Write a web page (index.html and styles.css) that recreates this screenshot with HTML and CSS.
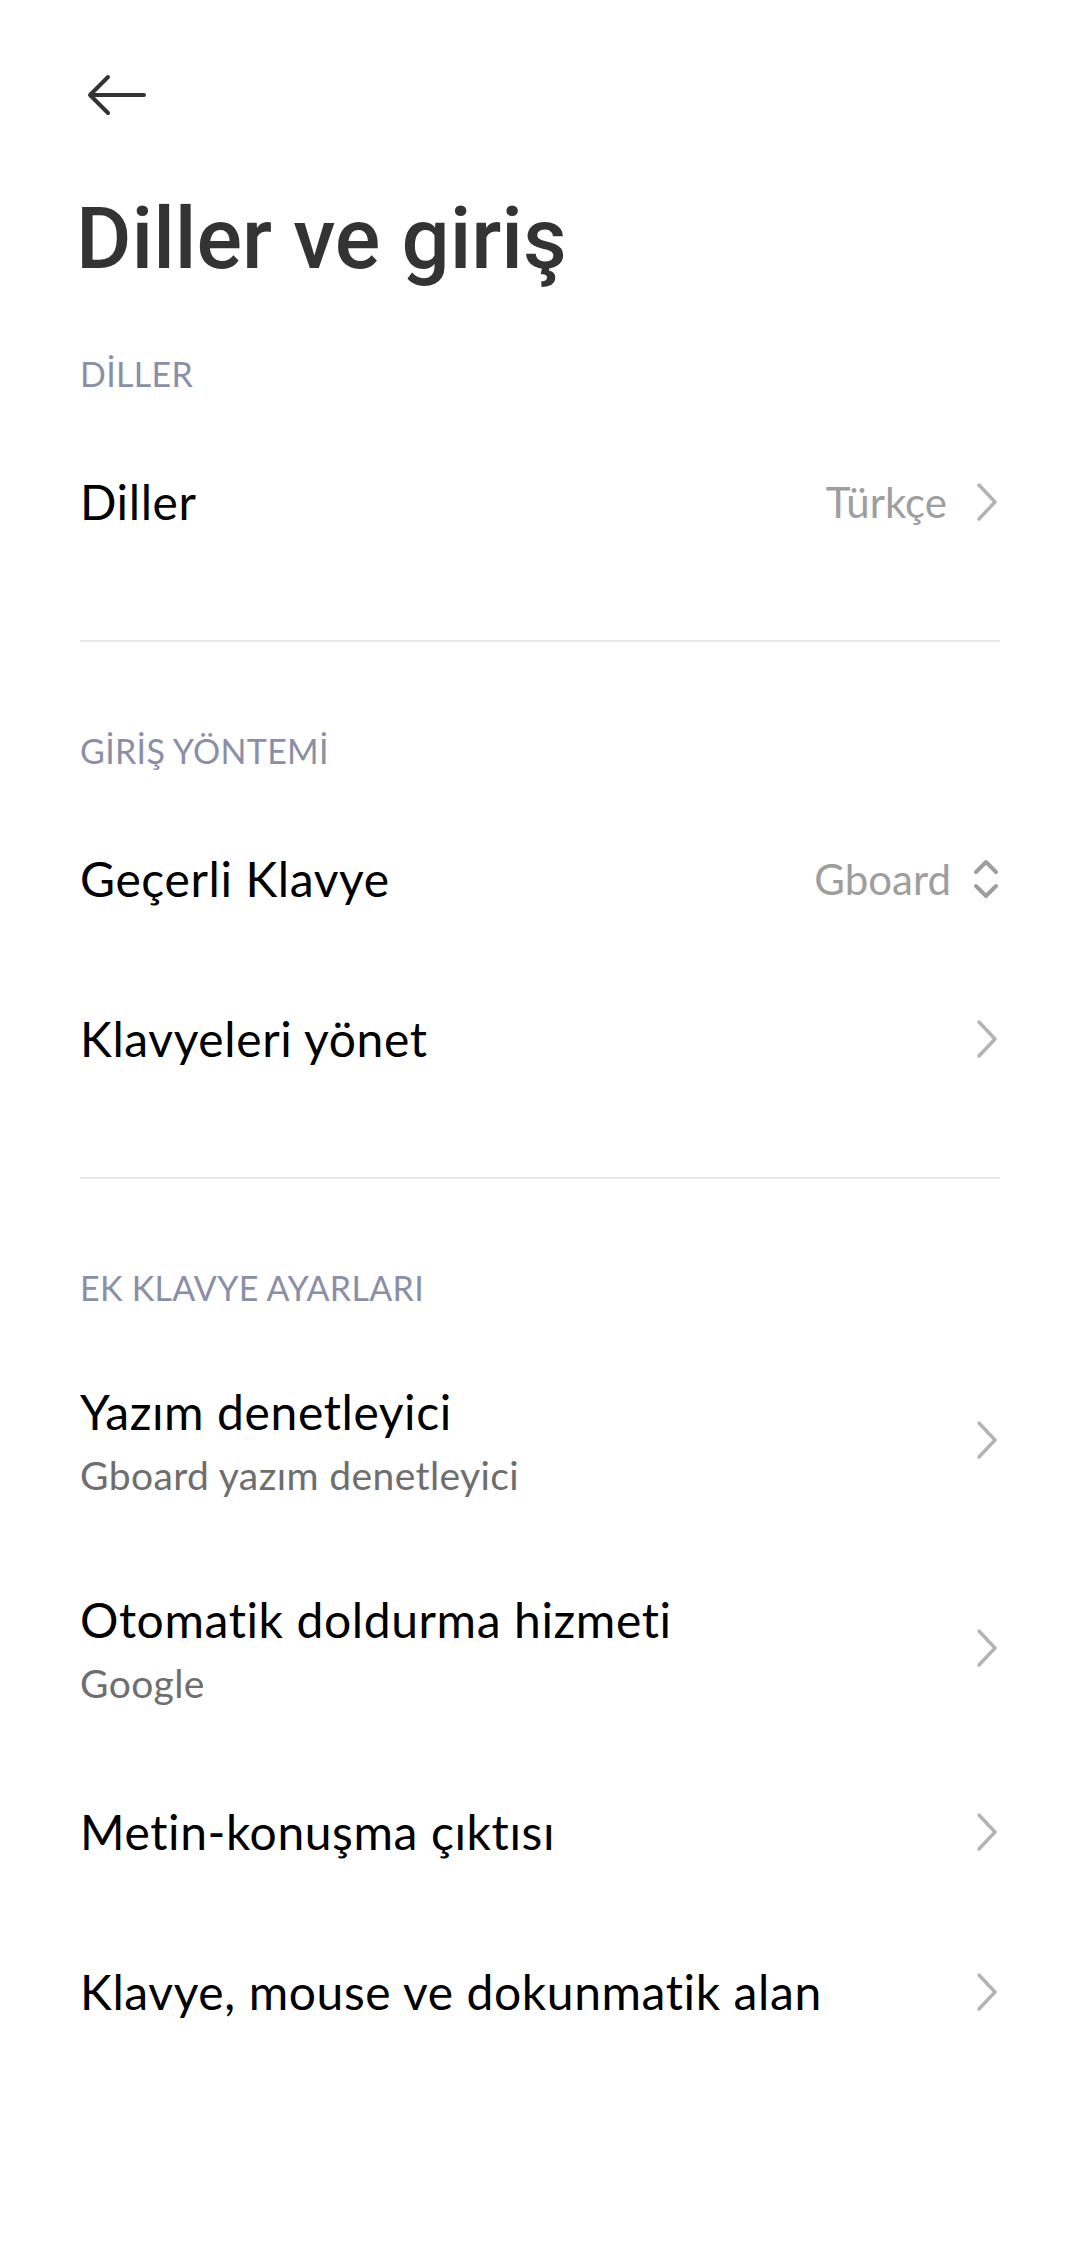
FILE: index.html
```html
<!DOCTYPE html>
<html lang="tr">
<head>
<meta charset="utf-8">
<title>Diller ve giriş</title>
<link rel="stylesheet" href="styles.css">
</head>
<body>
<div class="page">
  <div class="topbar">
    <svg class="back" width="62" height="42" viewBox="0 0 62 42"><path d="M4 21 H58 M22 3 L4 21 L22 39" fill="none" stroke="#333" stroke-width="4" stroke-linecap="round" stroke-linejoin="round"/></svg>
  </div>
  <h1 class="title">Diller ve giriş</h1>

  <section class="section divided">
    <div class="header">DİLLER</div>
    <div class="row">
      <div class="text"><div class="label">Diller</div></div>
      <div class="value">Türkçe</div>
      <svg class="chev" width="22" height="40" viewBox="0 0 22 40"><path d="M3 3 L19 20 L3 37" fill="none" stroke="#b3b3b3" stroke-width="3.5" stroke-linecap="round" stroke-linejoin="round"/></svg>
    </div>
  </section>

  <section class="section divided">
    <div class="header">GİRİŞ YÖNTEMİ</div>
    <div class="row">
      <div class="text"><div class="label">Geçerli Klavye</div></div>
      <div class="value value-tight">Gboard</div>
      <svg class="updown" width="26" height="42" viewBox="0 0 26 42"><path d="M3 14 L13 4 L23 14 M3 28 L13 38 L23 28" fill="none" stroke="#9e9e9e" stroke-width="4" stroke-linecap="round" stroke-linejoin="round"/></svg>
    </div>
    <div class="row">
      <div class="text"><div class="label">Klavyeleri yönet</div></div>
      <svg class="chev" width="22" height="40" viewBox="0 0 22 40"><path d="M3 3 L19 20 L3 37" fill="none" stroke="#b3b3b3" stroke-width="3.5" stroke-linecap="round" stroke-linejoin="round"/></svg>
    </div>
  </section>

  <section class="section">
    <div class="header">EK KLAVYE AYARLARI</div>
    <div class="row row-tall">
      <div class="text"><div class="label">Yazım denetleyici</div><div class="sub">Gboard yazım denetleyici</div></div>
      <svg class="chev" width="22" height="40" viewBox="0 0 22 40"><path d="M3 3 L19 20 L3 37" fill="none" stroke="#b3b3b3" stroke-width="3.5" stroke-linecap="round" stroke-linejoin="round"/></svg>
    </div>
    <div class="row row-tall">
      <div class="text"><div class="label">Otomatik doldurma hizmeti</div><div class="sub">Google</div></div>
      <svg class="chev" width="22" height="40" viewBox="0 0 22 40"><path d="M3 3 L19 20 L3 37" fill="none" stroke="#b3b3b3" stroke-width="3.5" stroke-linecap="round" stroke-linejoin="round"/></svg>
    </div>
    <div class="row">
      <div class="text"><div class="label">Metin-konuşma çıktısı</div></div>
      <svg class="chev" width="22" height="40" viewBox="0 0 22 40"><path d="M3 3 L19 20 L3 37" fill="none" stroke="#b3b3b3" stroke-width="3.5" stroke-linecap="round" stroke-linejoin="round"/></svg>
    </div>
    <div class="row">
      <div class="text"><div class="label">Klavye, mouse ve dokunmatik alan</div></div>
      <svg class="chev" width="22" height="40" viewBox="0 0 22 40"><path d="M3 3 L19 20 L3 37" fill="none" stroke="#b3b3b3" stroke-width="3.5" stroke-linecap="round" stroke-linejoin="round"/></svg>
    </div>
  </section>
</div>
</body>
</html>
```

FILE: styles.css
```css
html, body {
  margin: 0;
  padding: 0;
  background: #ffffff;
}
body {
  width: 1080px;
  height: 2259px;
  font-family: Lato, "Noto Sans", sans-serif;
  color: #000;
}
.page {
  display: flex;
  flex-direction: column;
}
.topbar {
  padding: 74px 0 0 86px;
  height: 42px;
}
.back {
  display: block;
}
.title {
  margin: 73px 0 0 0;
  padding-left: 76px;
  font-family: Roboto, "Liberation Sans", sans-serif;
  font-weight: 500;
  font-size: 85px;
  line-height: 100px;
  height: 100px;
  color: #333333;
}
.section {
  margin: 0 80px;
  padding-top: 65px;
}
.section + .section {
  padding-top: 89px;
}
.divided {
  padding-bottom: 58px;
  border-bottom: 2px solid #e8e8e8;
}
.header {
  font-size: 34px;
  line-height: 40px;
  height: 40px;
  letter-spacing: 0.3px;
  color: #8a8fa7;
  margin-bottom: 28px;
}
.row {
  display: flex;
  align-items: center;
  height: 160px;
}
.row-tall {
  height: 208px;
}
.text {
  flex: 1;
  display: flex;
  flex-direction: column;
}
.label {
  font-size: 48px;
  line-height: 58px;
  letter-spacing: 0.6px;
  color: #000;
}
.sub {
  margin-top: 11px;
  font-size: 39px;
  line-height: 46px;
  letter-spacing: 0.4px;
  color: #6e6e6e;
}
.value {
  font-size: 42px;
  line-height: 50px;
  color: #9e9e9e;
  margin-right: 29px;
}
.value-tight {
  margin-right: 22px;
}
.chev {
  display: block;
  margin-right: 2px;
}
.updown {
  display: block;
  margin-right: 1px;
}
```
